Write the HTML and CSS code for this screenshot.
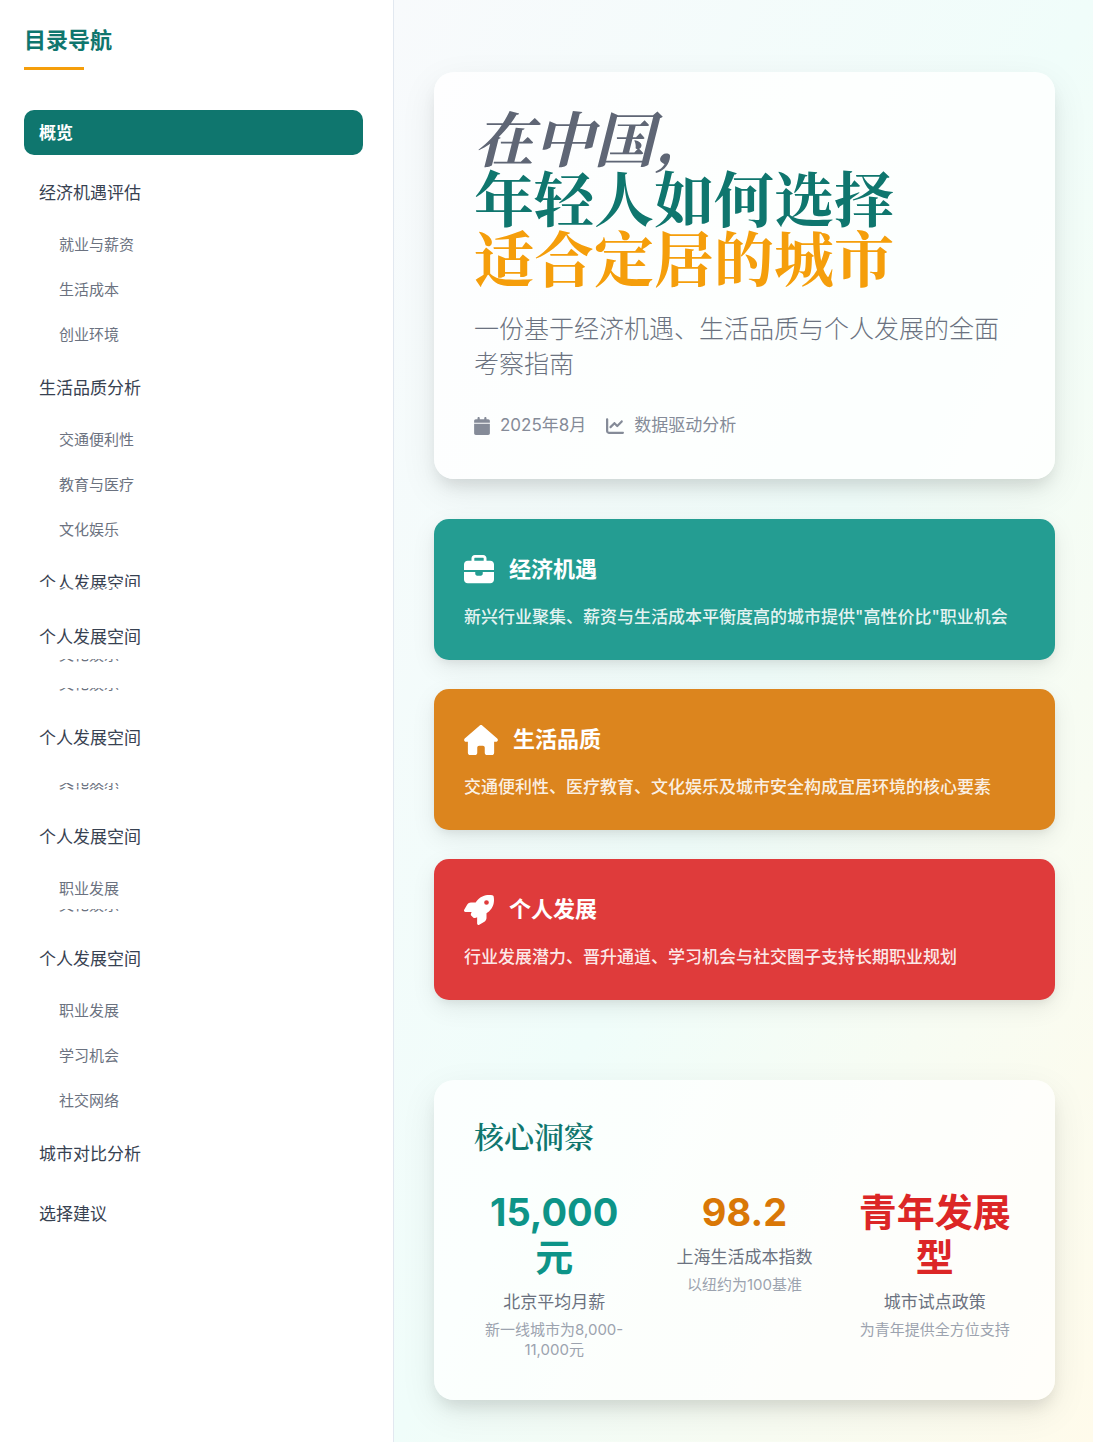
FILE: index.html
```html
<!DOCTYPE html>
<html lang="zh-CN">
<head>
<meta charset="utf-8">
<meta name="viewport" content="width=device-width, initial-scale=1">
<title>在中国,年轻人如何选择适合定居的城市</title>
<link rel="stylesheet" href="styles.css">
</head>
<body>
<div class="layout">
  <aside class="sidebar">
    <h2 class="sidebar-title">目录导航</h2>
    <nav aria-label="目录导航">
      <ul class="toc">
        <li><a class="toc-link active" href="#overview">概览</a></li>
        <li><a class="toc-link" href="#economy">经济机遇评估</a>
          <ul class="toc-sub">
            <li><a href="#jobs">就业与薪资</a></li>
            <li><a href="#cost">生活成本</a></li>
            <li><a href="#startup">创业环境</a></li>
          </ul>
        </li>
        <li class="close"><a class="toc-link" href="#quality">生活品质分析</a>
          <ul class="toc-sub">
            <li><a href="#transport">交通便利性</a></li>
            <li><a href="#education">教育与医疗</a></li>
            <li><a href="#culture">文化娱乐</a></li>
          </ul>
        </li>
        <li class="close"><a class="toc-link cut" href="#growth">个人发展空间</a>
          <div class="sliver">文化娱乐</div>
        </li>
        <li class="after-sliver"><a class="toc-link" href="#growth">个人发展空间</a>
          <div class="sliver">文化娱乐</div>
          <div class="sliver sliver-next">文化娱乐</div>
        </li>
        <li class="after-sliver"><a class="toc-link" href="#growth">个人发展空间</a>
          <div class="sliver sliver-tall">文化娱乐</div>
          <div class="sliver">文化娱乐</div>
        </li>
        <li class="after-sliver"><a class="toc-link" href="#growth">个人发展空间</a>
          <ul class="toc-sub">
            <li><a href="#career">职业发展</a></li>
          </ul>
          <div class="sliver">文化娱乐</div>
        </li>
        <li class="after-sliver"><a class="toc-link" href="#growth">个人发展空间</a>
          <ul class="toc-sub">
            <li><a href="#career">职业发展</a></li>
            <li><a href="#learning">学习机会</a></li>
            <li><a href="#social">社交网络</a></li>
          </ul>
        </li>
        <li class="close"><a class="toc-link" href="#compare">城市对比分析</a></li>
        <li><a class="toc-link" href="#advice">选择建议</a></li>
      </ul>
    </nav>
  </aside>

  <main class="main" id="overview">
    <header class="panel hero">
      <h1 class="hero-title">
        <span class="line"><em>在中国,</em></span>
        <span class="line line-teal">年轻人如何选择</span>
        <span class="line line-amber">适合定居的城市</span>
      </h1>
      <p class="hero-sub">一份基于经济机遇、生活品质与个人发展的全面考察指南</p>
      <div class="meta">
        <span class="meta-item">
          <svg class="icon-cal" viewBox="0 0 448 512" aria-hidden="true"><path d="M96 32V64H48C21.500 64 0 85.500 0 112v48H448V112c0-26.500-21.500-48-48-48H352V32c0-17.700-14.300-32-32-32s-32 14.300-32 32V64H160V32c0-17.700-14.300-32-32-32S96 14.300 96 32zM448 192H0V464c0 26.500 21.500 48 48 48H400c26.500 0 48-21.500 48-48V192z"/></svg>
          2025年8月
        </span>
        <span class="meta-item">
          <svg class="icon-chart" viewBox="0 0 512 512" aria-hidden="true"><path d="M64 64c0-17.700-14.300-32-32-32S0 46.300 0 64V400c0 44.200 35.800 80 80 80H480c17.700 0 32-14.300 32-32s-14.300-32-32-32H80c-8.800 0-16-7.200-16-16V64zm406.600 86.600c12.500-12.500 12.500-32.800 0-45.300s-32.800-12.500-45.300 0L320 210.700l-57.400-57.400c-12.500-12.500-32.800-12.500-45.300 0l-112 112c-12.500 12.500-12.500 32.800 0 45.300s32.800 12.500 45.300 0L240 221.300l57.400 57.400c12.500 12.500 32.800 12.500 45.300 0l128-128z"/></svg>
          数据驱动分析
        </span>
      </div>
    </header>

    <section class="pillars">
      <article class="pillar pillar-teal">
        <h3>
          <svg class="icon" viewBox="0 0 512 512" aria-hidden="true"><path d="M184 48H328c4.400 0 8 3.600 8 8V96H176V56c0-4.400 3.600-8 8-8zm-56 8V96H64C28.700 96 0 124.700 0 160v96H192 320 512V160c0-35.300-28.700-64-64-64H384V56c0-30.900-25.100-56-56-56H184c-30.900 0-56 25.100-56 56zM512 288H320v32c0 17.700-14.300 32-32 32H224c-17.700 0-32-14.300-32-32V288H0V416c0 35.300 28.700 64 64 64H448c35.300 0 64-28.700 64-64V288z"/></svg>
          经济机遇
        </h3>
        <p>新兴行业聚集、薪资与生活成本平衡度高的城市提供"高性价比"职业机会</p>
      </article>
      <article class="pillar pillar-amber">
        <h3>
          <svg class="icon icon-wide" viewBox="0 0 576 512" aria-hidden="true"><path d="M575.800 255.500c0 18-15 32.100-32 32.100h-32l.7 160.200c0 2.700-.2 5.400-.5 8.100V472c0 22.100-17.900 40-40 40H456c-1.100 0-2.200 0-3.300-.1c-1.400 .1-2.800 .1-4.200 .1H416 392c-22.100 0-40-17.900-40-40V448 384c0-17.700-14.300-32-32-32H256c-17.700 0-32 14.300-32 32v64 24c0 22.100-17.900 40-40 40H160 128.100c-1.500 0-3-.1-4.500-.2c-1.200 .1-2.400 .2-3.600 .2H104c-22.100 0-40-17.900-40-40V360c0-.9 0-1.900 .1-2.800V287.600H32c-18 0-32-14-32-32.100c0-9 3-17 10-24L266.400 8c7-7 15-8 22-8s15 2 21 7L564.800 231.500c8 7 12 15 11 24z"/></svg>
          生活品质
        </h3>
        <p>交通便利性、医疗教育、文化娱乐及城市安全构成宜居环境的核心要素</p>
      </article>
      <article class="pillar pillar-red">
        <h3>
          <svg class="icon" viewBox="0 0 512 512" aria-hidden="true"><path d="M156.600 384.900L125.700 354c-8.500-8.500-11.500-20.800-7.700-32.200c3-8.900 7-20.500 11.800-33.800L24 288c-8.600 0-16.600-4.600-20.900-12.100s-4.200-16.700 .2-24.100l52.500-88.500c13-21.900 36.500-35.300 61.900-35.300l82.300 0c2.400-4 4.800-7.700 7.200-11.300C289.100-4.100 411.100-8.100 483.900 5.300c11.600 2.100 20.600 11.200 22.800 22.800c13.400 72.900 9.300 194.800-111.400 276.700c-3.500 2.400-7.300 4.800-11.300 7.200v82.300c0 25.400-13.400 49-35.300 61.900l-88.500 52.500c-7.400 4.400-16.600 4.500-24.100 .2s-12.100-12.200-12.100-20.900V380.800c-14.100 4.900-26.400 8.900-35.700 11.900c-11.200 3.600-23.400 .5-31.800-7.800zM384 168a40 40 0 1 0 0-80 40 40 0 1 0 0 80z"/></svg>
          个人发展
        </h3>
        <p>行业发展潜力、晋升通道、学习机会与社交圈子支持长期职业规划</p>
      </article>
    </section>

    <section class="panel insights">
      <h2>核心洞察</h2>
      <div class="stats">
        <div class="stat">
          <div class="value value-teal">15,000元</div>
          <div class="label">北京平均月薪</div>
          <div class="note">新一线城市为8,000-11,000元</div>
        </div>
        <div class="stat">
          <div class="value value-amber">98.2</div>
          <div class="label">上海生活成本指数</div>
          <div class="note">以纽约为100基准</div>
        </div>
        <div class="stat">
          <div class="value value-red">青年发展型</div>
          <div class="label">城市试点政策</div>
          <div class="note">为青年提供全方位支持</div>
        </div>
      </div>
    </section>
  </main>
</div>
</body>
</html>
```
FILE: styles.css
```css
* { box-sizing: border-box; margin: 0; padding: 0; }

body {
  font-family: Inter, "Noto Sans CJK SC", sans-serif;
  font-size: 17px;
  line-height: 25px;
  color: #374151;
  background: #fff;
}

ul { list-style: none; }
a { color: inherit; text-decoration: none; }

.layout { display: flex; min-height: 100vh; }

/* Sidebar */
.sidebar {
  flex: 0 0 394px;
  padding: 20px 30px 20px 24px;
  background: #fff;
  border-right: 1px solid #e2e8f0;
}
.sidebar-title {
  font-size: 22px;
  line-height: 40px;
  font-weight: 600;
  color: #0f766e;
  margin-bottom: 40px;
}
.sidebar-title::after {
  content: "";
  display: block;
  width: 60px;
  height: 3px;
  margin-top: 7px;
  background: #f59e0b;
}
.toc > li + li { margin-top: 15px; }
.toc > li.close { margin-top: 10px; }
.toc > li.after-sliver { margin-top: 24px; }
.toc-link {
  display: block;
  padding: 11px 15px 9px;
  border-radius: 10px;
  font-weight: 400;
}
.toc-link.active { background: #0f766e; color: #fff; font-weight: 600; }
.toc-link.cut { height: 27px; overflow: hidden; }
.toc-sub { margin-top: 10px; font-size: 15px; line-height: 20px; color: #6b7280; }
.toc-sub li + li { margin-top: 5px; }
.toc-sub a { display: block; padding: 10px 15px 10px 35px; }

/* Rows cut down to the lowest pixels of their text */
.sliver {
  display: flex;
  align-items: flex-end;
  height: 3px;
  padding-left: 35px;
  overflow: hidden;
  font-size: 15px;
  line-height: 15px;
  color: #6b7280;
}
.sliver-next { margin-top: 26px; }
.sliver-tall { height: 4px; margin-top: 23px; }

/* Main column */
.main {
  flex: 1;
  min-width: 0;
  padding: 72px 38px 42px 40px;
  background: linear-gradient(to bottom right, #f8fafc, #f0fdfa, #fffbeb);
}
.panel {
  padding: 40px;
  border-radius: 20px;
  background: rgba(255, 255, 255, .8);
  box-shadow: 0 12px 36px rgba(0, 0, 0, .08), 0 10px 16px -4px rgba(0, 0, 0, .1);
}
.hero-title {
  font-family: "Liberation Serif", "Noto Serif CJK SC", "Noto Serif SC", serif;
  font-size: 60px;
  line-height: 60px;
  font-weight: 700;
}
.line { display: block; }
.hero-title em {
  font-family: "Noto Serif CJK SC", "Noto Serif SC", serif;
  line-height: 0;
  color: #5f6675;
}
.line-teal { color: #0f766e; }
.line-amber { color: #f59e0b; }
.hero-sub {
  margin-top: 20px;
  font-size: 25px;
  line-height: 35px;
  font-weight: 300;
  color: #6b7280;
}
.meta { display: flex; flex-wrap: wrap; gap: 20px; margin-top: 30px; line-height: 27px; color: #858b98; }
.meta-item { display: flex; align-items: center; gap: 10px; }
.meta svg { height: 18px; fill: currentColor; }
.icon-cal { width: 16px; }
.icon-chart { width: 18px; }

/* Pillar cards */
.pillars { display: grid; gap: 29px; margin: 40px 0 80px; }
.pillar {
  padding: 30px;
  border-radius: 15px;
  color: #fff;
  box-shadow: 0 8px 24px rgba(0, 0, 0, .08), 0 4px 10px -2px rgba(0, 0, 0, .08);
}
.pillar-teal { background: #249d92; }
.pillar-amber { background: #dc851e; }
.pillar-red { background: #df3b3b; }
.pillar h3 {
  display: flex;
  align-items: center;
  gap: 15px;
  font-size: 22px;
  line-height: 41px;
  font-weight: 700;
}
.pillar p { margin-top: 15px; font-weight: 500; color: rgba(255, 255, 255, .9); }
.icon { width: 30px; height: 30px; fill: currentColor; }
.icon-wide { width: 34px; }

/* Key figures */
.insights { background: rgba(255, 255, 255, .7); }
.insights h2 {
  font-family: "Liberation Serif", "Noto Serif CJK SC", "Noto Serif SC", serif;
  font-size: 30px;
  line-height: 36px;
  font-weight: 600;
  color: #0f766e;
}
.stats { display: grid; grid-template-columns: repeat(3, 1fr); gap: 30px; margin-top: 34px; text-align: center; }
.value { font-size: 38px; line-height: 45px; font-weight: 700; }
.value-teal { color: #0d9488; }
.value-amber { color: #d97706; }
.value-red { color: #dc2626; }
.label { margin-top: 10px; color: #6b7280; }
.note { margin-top: 5px; font-size: 15px; line-height: 20px; color: #9ca3af; }
```
